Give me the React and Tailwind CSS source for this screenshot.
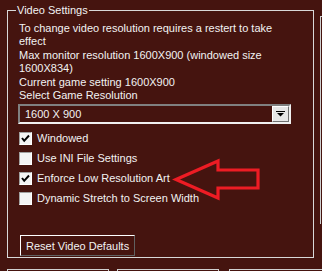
import React from "react";

const font = { fontFamily: '"Liberation Sans", Arial, sans-serif' };

function Checkbox({ checked, label }) {
  return (
    <div className="flex items-center h-[20px]">
      <div className="w-[13px] h-[13px] border border-t-[#a0a0a0] border-l-[#a0a0a0] border-b-white border-r-white bg-[#f4f4f4] flex items-center justify-center">
        {checked && (
          <svg width="9" height="9" viewBox="0 0 9 9">
            <path d="M1 4 L3.2 6.8 L8 1.5" stroke="#000" strokeWidth="2" fill="none" />
          </svg>
        )}
      </div>
      <span className="ml-[5px] whitespace-nowrap">{label}</span>
    </div>
  );
}

export default function App() {
  return (
    <div
      className="w-[322px] h-[271px] overflow-hidden bg-[#45140f] text-[#f2f2f2] text-[11px] relative"
      style={font}
    >
      <div className="flex">
        {/* Video Settings group */}
        <div className="relative ml-[7px] mt-[10px] w-[307px] h-[248px] border border-[#d8d8d8]">
          <span className="absolute -top-[8px] left-[8px] px-[1px] bg-[#45140f] leading-[14px] whitespace-nowrap">
            Video Settings
          </span>

          <div className="pl-[11px] pt-[11px] leading-[13.4px] whitespace-nowrap">
            <div>To change video resolution requires a restert to take</div>
            <div>effect</div>
            <div>Max monitor resolution 1600X900 (windowed size</div>
            <div>1600X834)</div>
            <div>Current game setting 1600X900</div>
            <div>Select Game Resolution</div>
          </div>

          {/* Resolution dropdown */}
          <div className="ml-[10px] mt-[2px] w-[273px] h-[20px] border-2 border-t-[#808080] border-l-[#808080] border-b-[#f0f0f0] border-r-[#f0f0f0] flex items-center">
            <span className="ml-[5px] flex-1">1600 X 900</span>
            <div className="w-[17px] h-[16px] bg-[#e6e6e6] border border-t-white border-l-white border-b-[#707070] border-r-[#707070] flex items-center justify-center">
              <svg width="9" height="6" viewBox="0 0 9 6">
                <rect x="0" y="0" width="9" height="1" fill="#000" />
                <path d="M1 2 H8 L4.5 5.5 Z" fill="#000" />
              </svg>
            </div>
          </div>

          <div className="pl-[11px] mt-[4px] flex flex-col">
            <Checkbox checked label="Windowed" />
            <Checkbox label="Use INI File Settings" />
            <Checkbox checked label="Enforce Low Resolution Art" />
            <Checkbox label="Dynamic Stretch to Screen Width" />
          </div>

          <button className="absolute left-[12px] bottom-[1px] h-[21px] px-[5px] border border-t-white border-l-white border-b-[#606060] border-r-[#606060] leading-[18px] whitespace-nowrap">
            Reset Video Defaults
          </button>
        </div>

        {/* neighbouring panel */}
        <div className="ml-[6px] mt-[16px] flex-1 h-[208px] border-l border-t border-[#d0d0d0]" />
      </div>

      {/* tabs row below */}
      <div className="flex mt-[11px] pl-[7px] gap-[8px]">
        <div className="w-[104px] h-[4px] border-t border-l border-r border-[#d0d0d0]" />
        <div className="w-[105px] h-[4px] border-t border-l border-r border-[#d0d0d0]" />
        <div className="ml-[2px] w-[95px] h-[4px] border-t border-l border-[#d0d0d0]" />
      </div>

      {/* red annotation arrow */}
      <svg className="absolute left-0 top-0" width="322" height="271" viewBox="0 0 322 271">
        <polygon
          points="176,179.5 218,161 218,170 258,170 258,188 218,188 218,198"
          fill="none"
          stroke="#ed1c24"
          strokeWidth="3.2"
        />
      </svg>
    </div>
  );
}
